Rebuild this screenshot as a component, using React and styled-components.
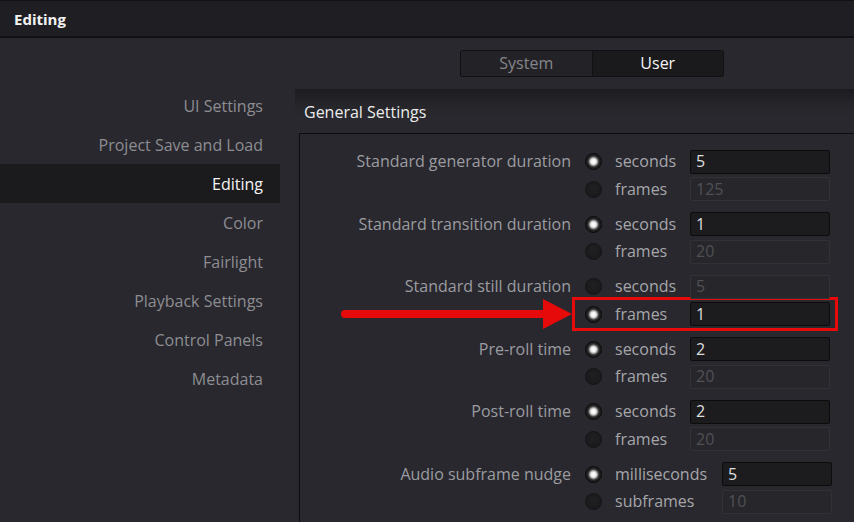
import React from 'react';
import styled, { createGlobalStyle } from 'styled-components';

const GlobalStyle = createGlobalStyle`
  html, body {
    margin: 0;
    padding: 0;
    background: #28282e;
    overflow: hidden;
  }
  body {
    font-family: "Open Sans", "Noto Sans", sans-serif;
  }
`

const Window = styled.div`
  width: 854px;
  height: 522px;
  display: flex;
  flex-direction: column;
  background: #28282e;
  overflow: hidden;
`

const TitleBar = styled.div`
  height: 38px;
  flex-shrink: 0;
  display: flex;
  align-items: center;
  padding-left: 14px;
  box-sizing: border-box;
  background: #1f1f23;
  border-top: 1px solid #121214;
  border-bottom: 2px solid #111113;
  color: #f2f2f2;
  font-size: 15px;
  font-weight: 700;
`

const Body = styled.div`
  flex: 1;
  display: flex;
  gap: 15px;
`

const Sidebar = styled.div`
  width: 280px;
  flex-shrink: 0;
  padding-top: 48px;
  display: flex;
  flex-direction: column;
`

const NavItem = styled.div`
  height: 39px;
  display: flex;
  align-items: center;
  justify-content: flex-end;
  padding-right: 17px;
  font-size: 16px;
  color: ${p => (p.$active ? '#f4f4f4' : '#8d8d92')};
  background: ${p => (p.$active ? '#1b1b1d' : 'transparent')};
`

const Main = styled.div`
  flex: 1;
  display: flex;
  flex-direction: column;
`

const TopRow = styled.div`
  height: 51px;
  padding-top: 12px;
  padding-left: 165px;
  box-sizing: border-box;
`

const Toggle = styled.div`
  width: 264px;
  height: 27px;
  display: flex;
  box-sizing: border-box;
  border: 1px solid #111113;
  border-radius: 2px;
  overflow: hidden;
`

const ToggleButton = styled.div`
  flex: 1;
  display: flex;
  align-items: center;
  justify-content: center;
  padding-bottom: 1px;
  font-size: 16px;
  color: ${p => (p.$active ? '#f4f4f4' : '#86868a')};
  background: ${p => (p.$active ? '#1a1a1c' : '#232327')};
  border-left: ${p => (p.$active ? '1px solid #111113' : 'none')};
`

const PanelHeader = styled.div`
  height: 44px;
  display: flex;
  align-items: center;
  padding-left: 9px;
  padding-top: 2px;
  box-sizing: border-box;
  font-size: 16px;
  color: #ececec;
  background: linear-gradient(to bottom, #1c1c20 0px, #26262b 18px, #28282e 30px);
`

const SettingsBox = styled.div`
  flex: 1;
  margin-left: 4px;
  border-left: 1px solid #0d0d0f;
  border-top: 1px solid #0d0d0f;
  padding-top: 14px;
  display: flex;
  flex-direction: column;
  gap: 7.5px;
`

const Group = styled.div`
  display: flex;
  flex-direction: column;
`

const Row = styled.div`
  position: relative;
  height: 27.5px;
  display: flex;
  align-items: center;
`

const Label = styled.div`
  width: 271px;
  padding-bottom: 1px;
  text-align: right;
  font-size: 16px;
  color: #9c9ca0;
  white-space: nowrap;
`

const Radio = styled.div`
  width: 17px;
  height: 17px;
  margin-left: 14px;
  border-radius: 50%;
  box-sizing: border-box;
  position: relative;
  z-index: 1;
  background: ${p => (p.$checked
    ? 'radial-gradient(circle, #ffffff 0px, #f0f0f0 2.5px, #9a9a9a 4px, #2a2a2c 5.5px, #141415 8.5px)'
    : 'radial-gradient(circle at 50% 40%, #202022 0px, #1a1a1c 8.5px)')};
  border: 1px solid ${p => (p.$checked ? '#0a0a0a' : '#141416')};
`

const OptionText = styled.div`
  width: ${p => p.$w}px;
  margin-left: 13px;
  padding-bottom: 1px;
  font-size: 16px;
  color: #a6a6aa;
  white-space: nowrap;
  position: relative;
  z-index: 1;
`

const Field = styled.div`
  width: ${p => p.$w}px;
  height: 24px;
  box-sizing: border-box;
  border-radius: 2px;
  display: flex;
  align-items: center;
  padding-left: 5px;
  padding-bottom: 1px;
  font-size: 16px;
  position: relative;
  z-index: 1;
  background: ${p => (p.$disabled ? '#26262b' : '#1c1c1e')};
  border: 1px solid ${p => (p.$disabled ? '#313136' : '#0c0c0d')};
  color: ${p => (p.$disabled ? '#505055' : '#dedede')};
`

const Highlight = styled.div`
  position: absolute;
  left: 272px;
  top: -4px;
  width: 266px;
  height: 34px;
  box-sizing: border-box;
  border: 3px solid #e60a0a;
`

const ArrowSvg = styled.svg`
  position: absolute;
  left: 40px;
  top: -3px;
`

const Arrow = () => (
  <ArrowSvg width="234" height="32" viewBox="0 0 234 32">
    <line x1="5" y1="16" x2="206" y2="16" stroke="#e60a0a" strokeWidth="8" strokeLinecap="round" />
    <polygon points="203,1 232,16 203,31" fill="#e60a0a" />
  </ArrowSvg>
)

const groups = [
  { label: 'Standard generator duration', a: 'seconds', b: 'frames', av: '5', bv: '125', pick: 'a' },
  { label: 'Standard transition duration', a: 'seconds', b: 'frames', av: '1', bv: '20', pick: 'a' },
  { label: 'Standard still duration', a: 'seconds', b: 'frames', av: '5', bv: '1', pick: 'b', mark: true },
  { label: 'Pre-roll time', a: 'seconds', b: 'frames', av: '2', bv: '20', pick: 'a' },
  { label: 'Post-roll time', a: 'seconds', b: 'frames', av: '2', bv: '20', pick: 'a' },
  { label: 'Audio subframe nudge', a: 'milliseconds', b: 'subframes', av: '5', bv: '10', pick: 'a', wide: true },
]

const nav = ['UI Settings', 'Project Save and Load', 'Editing', 'Color', 'Fairlight', 'Playback Settings', 'Control Panels', 'Metadata']

export default function App() {
  return (
    <Window>
      <GlobalStyle />
      <TitleBar>Editing</TitleBar>
      <Body>
        <Sidebar>
          {nav.map(n => (
            <NavItem key={n} $active={n === 'Editing'}>{n}</NavItem>
          ))}
        </Sidebar>
        <Main>
          <TopRow>
            <Toggle>
              <ToggleButton>System</ToggleButton>
              <ToggleButton $active>User</ToggleButton>
            </Toggle>
          </TopRow>
          <PanelHeader>General Settings</PanelHeader>
          <SettingsBox>
            {groups.map(g => {
              const tw = g.wide ? 107 : 75
              const fw = g.wide ? 110 : 140
              return (
                <Group key={g.label}>
                  <Row>
                    <Label>{g.label}</Label>
                    <Radio $checked={g.pick === 'a'} />
                    <OptionText $w={tw}>{g.a}</OptionText>
                    <Field $w={fw} $disabled={g.pick !== 'a'}>{g.av}</Field>
                  </Row>
                  <Row>
                    {g.mark && <Arrow />}
                    {g.mark && <Highlight />}
                    <Label />
                    <Radio $checked={g.pick === 'b'} />
                    <OptionText $w={tw}>{g.b}</OptionText>
                    <Field $w={fw} $disabled={g.pick !== 'b'}>{g.bv}</Field>
                  </Row>
                </Group>
              )
            })}
          </SettingsBox>
        </Main>
      </Body>
    </Window>
  )
}
